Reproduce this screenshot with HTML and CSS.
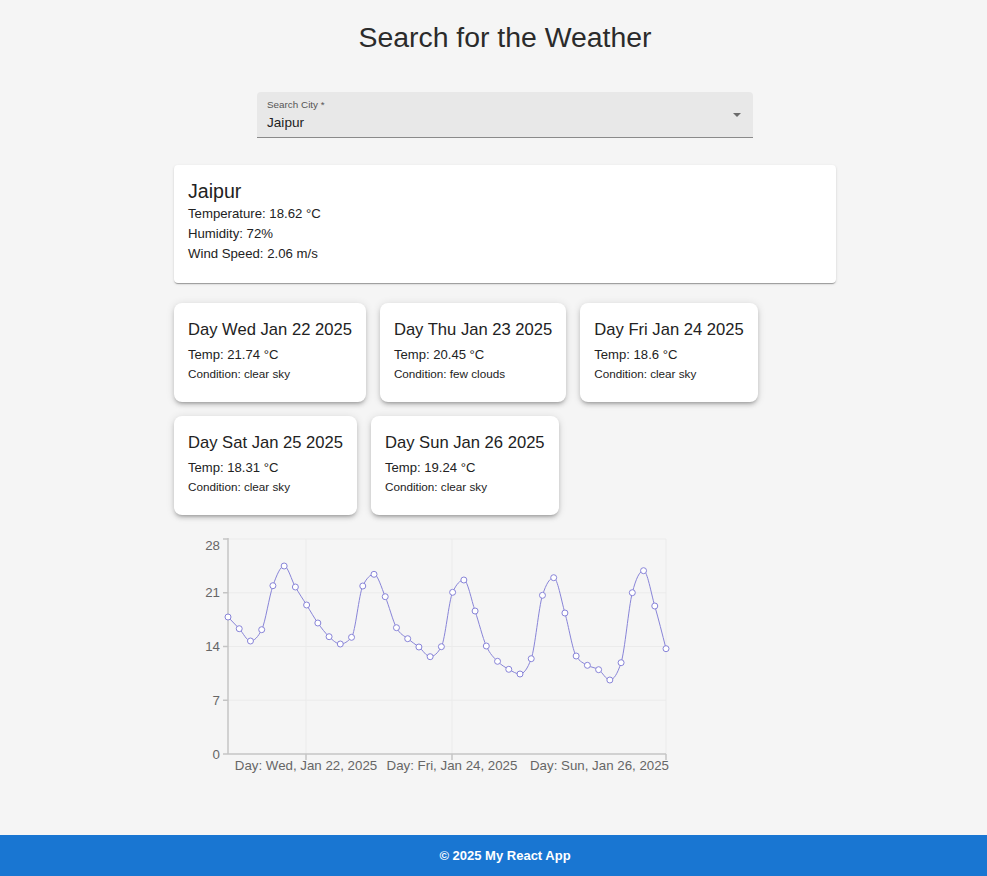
FILE: index.html
```html
<!DOCTYPE html>
<html lang="en">
<head>
<meta charset="utf-8">
<title>Weather</title>
<link rel="stylesheet" href="styles.css">
</head>
<body>
<div class="page">
  <main class="main">
    <div class="container">
      <h1 class="title">Search for the Weather</h1>
      <div class="search">
        <div class="search-text">
          <div class="search-label">Search City *</div>
          <div class="search-value">Jaipur</div>
        </div>
        <span class="search-arrow"></span>
      </div>
      <section class="current">
        <h2 class="current-city">Jaipur</h2>
        <p class="current-line">Temperature: 18.62 °C</p>
        <p class="current-line">Humidity: 72%</p>
        <p class="current-line">Wind Speed: 2.06 m/s</p>
      </section>
      <section class="forecast">
        <div class="fcard">
          <h3 class="fcard-title">Day Wed Jan 22 2025</h3>
          <p class="fcard-temp">Temp: 21.74 °C</p>
          <p class="fcard-cond">Condition: clear sky</p>
        </div>
        <div class="fcard">
          <h3 class="fcard-title">Day Thu Jan 23 2025</h3>
          <p class="fcard-temp">Temp: 20.45 °C</p>
          <p class="fcard-cond">Condition: few clouds</p>
        </div>
        <div class="fcard">
          <h3 class="fcard-title">Day Fri Jan 24 2025</h3>
          <p class="fcard-temp">Temp: 18.6 °C</p>
          <p class="fcard-cond">Condition: clear sky</p>
        </div>
        <div class="fcard">
          <h3 class="fcard-title">Day Sat Jan 25 2025</h3>
          <p class="fcard-temp">Temp: 18.31 °C</p>
          <p class="fcard-cond">Condition: clear sky</p>
        </div>
        <div class="fcard">
          <h3 class="fcard-title">Day Sun Jan 26 2025</h3>
          <p class="fcard-temp">Temp: 19.24 °C</p>
          <p class="fcard-cond">Condition: clear sky</p>
        </div>
      </section>
      <div class="chart">
        <svg class="chart-svg" width="510" height="250" viewBox="0 0 510 250">
          <g class="grid">
            <line x1="54" y1="9" x2="492" y2="9"/>
            <line x1="54" y1="62.75" x2="492" y2="62.75"/>
            <line x1="54" y1="116.5" x2="492" y2="116.5"/>
            <line x1="54" y1="170.25" x2="492" y2="170.25"/>
            <line x1="132" y1="9" x2="132" y2="224"/>
            <line x1="278" y1="9" x2="278" y2="224"/>
            <line x1="492" y1="9" x2="492" y2="224"/>
          </g>
          <g class="axis">
            <line x1="54" y1="8" x2="54" y2="224"/>
            <line x1="54" y1="224" x2="492" y2="224"/>
            <line x1="49" y1="9" x2="54" y2="9"/>
            <line x1="49" y1="62.75" x2="54" y2="62.75"/>
            <line x1="49" y1="116.5" x2="54" y2="116.5"/>
            <line x1="49" y1="170.25" x2="54" y2="170.25"/>
            <line x1="49" y1="224" x2="54" y2="224"/>
            <line x1="132" y1="224" x2="132" y2="230"/>
            <line x1="278" y1="224" x2="278" y2="230"/>
            <line x1="492" y1="224" x2="492" y2="230"/>
          </g>
          <g class="ticks">
            <text x="46" y="19.5" text-anchor="end">28</text>
            <text x="46" y="67.25" text-anchor="end">21</text>
            <text x="46" y="121" text-anchor="end">14</text>
            <text x="46" y="174.75" text-anchor="end">7</text>
            <text x="46" y="228.5" text-anchor="end">0</text>
            <text x="132" y="240" text-anchor="middle">Day: Wed, Jan 22, 2025</text>
            <text x="278" y="240" text-anchor="middle">Day: Fri, Jan 24, 2025</text>
            <text x="495" y="240" text-anchor="end">Day: Sun, Jan 26, 2025</text>
          </g>
          <path id="temp-line" class="line" d=""/>
          <g id="temp-dots" class="dots"></g>
        </svg>
      </div>
    </div>
  </main>
  <footer class="footer">© 2025 My React App</footer>
</div>
<script src="script.js"></script>
</body>
</html>
```
FILE: styles.css
```css
html, body {
  margin: 0;
  padding: 0;
}
body {
  background: #f5f5f5;
  font-family: "Liberation Sans", Arial, sans-serif;
  color: #222;
}
.page {
  min-height: 100vh;
  display: flex;
  flex-direction: column;
}
.main {
  flex: 1;
  padding: 20px 0 0 23px;
}
.container {
  width: 662px;
  margin: 0 auto;
}
.title {
  margin: 0;
  font-size: 28.4px;
  line-height: 34px;
  font-weight: 400;
  text-align: center;
  color: #2b2b2b;
}
.search {
  width: 496px;
  height: 45px;
  margin: 38px auto 0;
  background: #e8e8e8;
  border-bottom: 1px solid #8a8a8a;
  border-radius: 4px 4px 0 0;
  box-sizing: content-box;
  display: flex;
  align-items: flex-start;
  justify-content: space-between;
}
.search-text {
  padding: 7px 0 0 10px;
}
.search-label {
  font-size: 9.9px;
  line-height: 12px;
  color: #555;
}
.search-value {
  margin-top: 3px;
  font-size: 13.6px;
  line-height: 17px;
  color: #222;
}
.search-arrow {
  width: 0;
  height: 0;
  margin: 21px 12px 0 0;
  border-left: 4.5px solid transparent;
  border-right: 4.5px solid transparent;
  border-top: 4.5px solid #6b6b6b;
}
.current {
  margin-top: 27px;
  background: #fff;
  border-radius: 4px;
  padding: 14px 14px 19px;
  box-shadow: 0 2px 1px -1px rgba(0,0,0,.2), 0 1px 1px 0 rgba(0,0,0,.14), 0 1px 3px 0 rgba(0,0,0,.12);
}
.current-city {
  margin: 0 0 1px;
  font-size: 19.6px;
  line-height: 24px;
  font-weight: 400;
}
.current-line {
  margin: 0;
  font-size: 13.2px;
  line-height: 20px;
}
.forecast {
  margin-top: 20px;
  display: flex;
  flex-wrap: wrap;
  gap: 14px 14px;
}
.fcard {
  background: #fff;
  border-radius: 8px;
  padding: 15px 14px 19px;
  box-shadow: 0 3px 3px -2px rgba(0,0,0,.2), 0 3px 4px 0 rgba(0,0,0,.14), 0 1px 8px 0 rgba(0,0,0,.12);
}
.fcard-title {
  margin: 0 0 3px;
  font-size: 16.6px;
  line-height: 24px;
  font-weight: 400;
}
.fcard-temp {
  margin: 0;
  font-size: 13.1px;
  line-height: 20px;
}
.fcard-cond {
  margin: 0;
  font-size: 11.7px;
  line-height: 18px;
}
.chart {
  margin-top: 15px;
}
.chart-svg {
  display: block;
  overflow: visible;
}
.grid line {
  stroke: #ebebeb;
  stroke-width: 1;
}
.axis line {
  stroke: #c4c4c4;
  stroke-width: 1.5;
}
.ticks text {
  font-family: "Liberation Sans", Arial, sans-serif;
  font-size: 13.3px;
  fill: #666;
}
.line {
  fill: none;
  stroke: #8884d8;
  stroke-width: 1;
}
.dots circle {
  fill: #fff;
  stroke: #8884d8;
  stroke-width: 1;
}
.footer {
  height: 41px;
  line-height: 41px;
  background: #1976d2;
  color: #fff;
  font-size: 13px;
  font-weight: 700;
  text-align: center;
  padding-left: 23px;
}
```
FILE: script.js
```js
(function () {
  var pageY = [617, 628.7, 641, 629.7, 585.7, 566, 587, 605, 623, 636.7,
    644, 637.3, 586, 574.3, 596.7, 627.7, 638.7, 647, 656.7, 646.7,
    592.3, 580, 611, 646, 661.3, 669.3, 674, 658.7, 595.3, 577.7,
    613, 656, 665.3, 669.7, 680, 662.7, 592.7, 570.7, 606, 648.7];
  var n = pageY.length;
  var x0 = 54, x1 = 492;
  var pts = pageY.map(function (y, i) {
    return [x0 + (x1 - x0) * i / (n - 1), y - 530];
  });
  function sign(v) { return v < 0 ? -1 : 1; }
  function slope3(a, b, c) {
    var h0 = b[0] - a[0], h1 = c[0] - b[0];
    var s0 = (b[1] - a[1]) / h0, s1 = (c[1] - b[1]) / h1;
    var p = (s0 * h1 + s1 * h0) / (h0 + h1);
    return (sign(s0) + sign(s1)) * Math.min(Math.abs(s0), Math.abs(s1), 0.5 * Math.abs(p)) || 0;
  }
  var t = new Array(n);
  for (var i = 1; i < n - 1; i++) t[i] = slope3(pts[i - 1], pts[i], pts[i + 1]);
  var h = pts[1][0] - pts[0][0];
  t[0] = (3 * (pts[1][1] - pts[0][1]) / h - t[1]) / 2;
  t[n - 1] = (3 * (pts[n - 1][1] - pts[n - 2][1]) / h - t[n - 2]) / 2;
  var d = 'M' + pts[0][0].toFixed(2) + ',' + pts[0][1].toFixed(2);
  for (var j = 0; j < n - 1; j++) {
    var a = pts[j], b = pts[j + 1], dx = (b[0] - a[0]) / 3;
    d += 'C' + (a[0] + dx).toFixed(2) + ',' + (a[1] + dx * t[j]).toFixed(2) + ',' +
      (b[0] - dx).toFixed(2) + ',' + (b[1] - dx * t[j + 1]).toFixed(2) + ',' +
      b[0].toFixed(2) + ',' + b[1].toFixed(2);
  }
  document.getElementById('temp-line').setAttribute('d', d);
  var g = document.getElementById('temp-dots');
  var ns = 'http://www.w3.org/2000/svg';
  pts.forEach(function (p) {
    var c = document.createElementNS(ns, 'circle');
    c.setAttribute('cx', p[0].toFixed(2));
    c.setAttribute('cy', p[1].toFixed(2));
    c.setAttribute('r', '3');
    g.appendChild(c);
  });
})();
```
